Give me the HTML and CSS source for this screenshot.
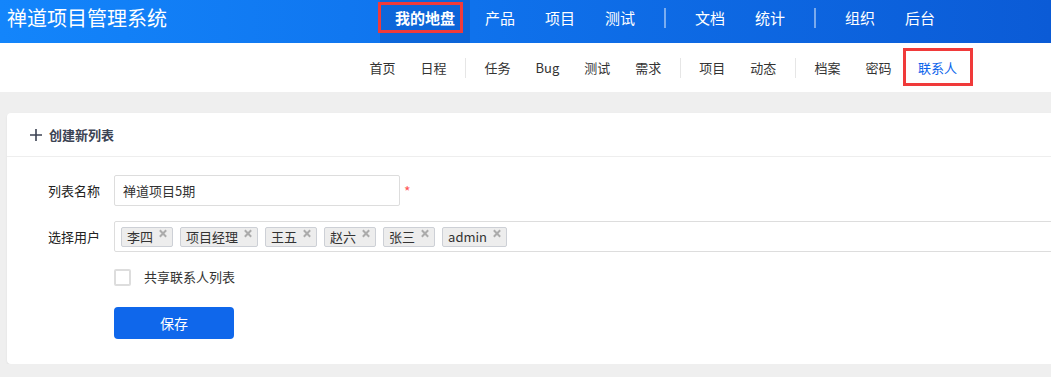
FILE: index.html
```html
<!DOCTYPE html>
<html lang="zh-CN">
<head>
    <meta charset="UTF-8">
    <meta name="viewport" content="width=device-width, initial-scale=1.0">
    <title>联系人 - 禅道项目管理系统</title>
    <link rel="stylesheet" href="styles.css">
</head>
<body>

    <div class="header">
        <div class="brand">禅道项目管理系统</div>
        <div class="nav">
            <a href="#" class="nav-item active">我的地盘</a>
            <a href="#" class="nav-item">产品</a>
            <a href="#" class="nav-item">项目</a>
            <a href="#" class="nav-item">测试</a>
            <span class="nav-divider"></span>
            <a href="#" class="nav-item">文档</a>
            <a href="#" class="nav-item">统计</a>
            <span class="nav-divider"></span>
            <a href="#" class="nav-item">组织</a>
            <a href="#" class="nav-item">后台</a>
        </div>
    </div>

    <div class="subnav">
        <a href="#" class="sub-item">首页</a>
        <a href="#" class="sub-item">日程</a>
        <span class="sub-divider"></span>
        <a href="#" class="sub-item">任务</a>
        <a href="#" class="sub-item">Bug</a>
        <a href="#" class="sub-item">测试</a>
        <a href="#" class="sub-item">需求</a>
        <span class="sub-divider"></span>
        <a href="#" class="sub-item">项目</a>
        <a href="#" class="sub-item">动态</a>
        <span class="sub-divider"></span>
        <a href="#" class="sub-item">档案</a>
        <a href="#" class="sub-item">密码</a>
        <a href="#" class="sub-item active">联系人</a>
    </div>

    <div class="main">
        <div class="panel">
            <div class="panel-heading">
                <svg class="plus-icon" width="12" height="12" viewBox="0 0 12 12">
                    <path d="M6 0V12M0 6H12" stroke="#3c4353" stroke-width="1.6" fill="none"/>
                </svg>
                <span>创建新列表</span>
            </div>

            <form class="panel-body">
                <div class="form-row">
                    <label class="form-label">列表名称</label>
                    <input type="text" class="form-input" value="禅道项目5期">
                    <span class="required">*</span>
                </div>

                <div class="form-row">
                    <label class="form-label">选择用户</label>
                    <div class="picker">
                        <span class="tag">李四<i class="tag-close"></i></span>
                        <span class="tag">项目经理<i class="tag-close"></i></span>
                        <span class="tag">王五<i class="tag-close"></i></span>
                        <span class="tag">赵六<i class="tag-close"></i></span>
                        <span class="tag">张三<i class="tag-close"></i></span>
                        <span class="tag">admin<i class="tag-close"></i></span>
                    </div>
                </div>

                <div class="form-row check-row">
                    <span class="checkbox"></span>
                    <span class="check-text">共享联系人列表</span>
                </div>

                <div class="form-row button-row">
                    <button type="button" class="btn-save">保存</button>
                </div>
            </form>
        </div>
    </div>

</body>
</html>
```

FILE: styles.css
```css
body {
    margin: 0;
    padding: 0;
    font-family: "Noto Sans CJK SC", "Noto Sans", sans-serif;
    font-size: 13px;
    color: #333;
    background-color: #efefef;
    overflow: hidden;
}

a {
    text-decoration: none;
}

/* Top header */
.header {
    height: 43px;
    display: flex;
    background: linear-gradient(90deg, #1385fb 0%, #0f72ec 45%, #0b5bd6 100%);
    color: #fff;
}

.brand {
    font-size: 20px;
    line-height: 36px;
    padding-left: 7px;
    width: 373px;
}

.nav {
    display: flex;
    align-items: flex-start;
}

.nav-item {
    color: #fff;
    font-size: 15px;
    line-height: 36px;
    height: 43px;
    padding: 0 15px;
    box-sizing: border-box;
}

.nav-item.active {
    font-weight: bold;
    background-color: rgba(0, 40, 120, 0.18);
    position: relative;
}

.nav-item.active::after {
    content: "";
    position: absolute;
    left: -2px;
    top: 2px;
    width: 79px;
    height: 25px;
    border: 3px solid #f03a3a;
}

.nav-divider {
    width: 2px;
    height: 20px;
    margin: 8px 14px 0 14px;
    background-color: rgba(255, 255, 255, 0.45);
}

/* Sub navigation */
.subnav {
    height: 49px;
    background-color: #fff;
    display: flex;
    align-items: center;
    padding-left: 357px;
}

.sub-item {
    color: #333;
    font-size: 13px;
    line-height: 20px;
    padding: 0 12.5px;
}

.sub-item.active {
    color: #0c64eb;
    position: relative;
    padding: 0 14px;
}

.sub-item.active::after {
    content: "";
    position: absolute;
    left: -1px;
    top: -10px;
    width: 64px;
    height: 32px;
    border: 3px solid #f03a3a;
}

.sub-divider {
    width: 1px;
    height: 20px;
    margin: 0 6px;
    background-color: #e6e6e6;
}

/* Main content */
.main {
    padding: 21px 0 0 7px;
}

.panel {
    width: calc(100% + 20px);
    height: 251px;
    background-color: #fff;
    border-radius: 4px;
    box-shadow: 0 1px 2px rgba(0, 0, 0, 0.08);
}

.panel-heading {
    height: 44px;
    display: flex;
    align-items: center;
    padding-left: 23px;
    border-bottom: 1px solid #eee;
    box-sizing: border-box;
    font-weight: bold;
    color: #3c4353;
}

.plus-icon {
    margin-right: 7px;
}

.panel-body {
    padding: 18px 0 0 41px;
    margin: 0;
}

.form-row {
    display: flex;
    align-items: center;
    margin-bottom: 15px;
}

.form-label {
    width: 52px;
    margin-right: 14px;
    color: #222;
    line-height: 20px;
}

.form-input {
    width: 286px;
    height: 31px;
    box-sizing: border-box;
    border: 1px solid #ddd;
    border-radius: 2px;
    padding: 0 8px;
    font-family: inherit;
    font-size: 13px;
    color: #333;
    outline: none;
}

.required {
    color: #f55;
    margin-left: 4px;
    font-size: 14px;
    line-height: 14px;
}

.picker {
    flex: 1;
    height: 31px;
    box-sizing: border-box;
    border: 1px solid #ddd;
    border-radius: 2px;
    display: flex;
    align-items: center;
    gap: 7px;
    padding-left: 6px;
}

.tag {
    display: inline-flex;
    align-items: center;
    height: 20px;
    box-sizing: border-box;
    border: 1px solid #cdd0d6;
    border-radius: 2px;
    background-color: #ededed;
    padding: 0 6px 0 5px;
    line-height: 18px;
    color: #333;
}

.tag-close {
    width: 7px;
    height: 7px;
    margin-left: 6px;
    margin-top: -6px;
    position: relative;
}

.tag-close::before,
.tag-close::after {
    content: "";
    position: absolute;
    left: 2.5px;
    top: -1px;
    width: 2px;
    height: 9px;
    background-color: #ababab;
    transform: rotate(45deg);
}

.tag-close::after {
    transform: rotate(-45deg);
}

.check-row {
    padding-left: 66px;
    margin-bottom: 20px;
}

.checkbox {
    width: 17px;
    height: 17px;
    box-sizing: border-box;
    border: 2px solid #ddd;
    border-radius: 2px;
}

.check-text {
    margin-left: 13px;
    color: #333;
    line-height: 20px;
}

.button-row {
    padding-left: 66px;
}

.btn-save {
    width: 120px;
    height: 32px;
    border: none;
    border-radius: 4px;
    background-color: #0f67eb;
    color: #fff;
    font-family: inherit;
    font-size: 14px;
    cursor: pointer;
}
```
